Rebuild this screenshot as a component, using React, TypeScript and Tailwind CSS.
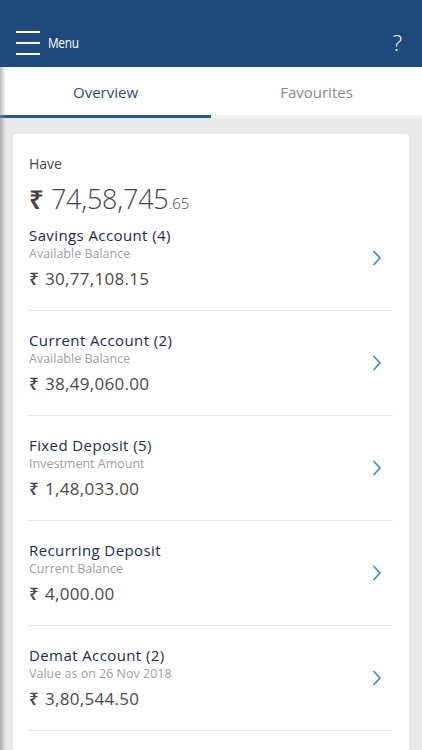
import React from "react";

const rows = [
  { title: "Savings Account (4)", sub: "Available Balance", amt: "30,77,108.15" },
  { title: "Current Account (2)", sub: "Available Balance", amt: "38,49,060.00" },
  { title: "Fixed Deposit (5)", sub: "Investment Amount", amt: "1,48,033.00" },
  { title: "Recurring Deposit", sub: "Current Balance", amt: "4,000.00" },
  { title: "Demat Account (2)", sub: "Value as on 26 Nov 2018", amt: "3,80,544.50" },
];

function Chevron() {
  return (
    <svg width="12" height="18" viewBox="0 0 12 18" fill="none">
      <path d="M3 2.5 L9 9 L3 15.5" stroke="#4a86d8" strokeWidth="1.8" strokeLinecap="round" strokeLinejoin="round" />
    </svg>
  );
}

export default function App() {
  return (
    <div className="relative w-[422px] h-[750px] overflow-hidden bg-[#e9e9e9]" style={{ fontFamily: '"Open Sans", "Noto Sans", sans-serif' }}>
      <header className="h-[67px] bg-[#1f4a7c] flex items-end justify-between pb-[12px] pl-[16px] pr-[20px]">
        <div className="flex items-center gap-[8px]">
          <div className="flex flex-col gap-[9px] w-[24px]">
            <div className="h-[2px] bg-white" />
            <div className="h-[2px] bg-white" />
            <div className="h-[2px] bg-white" />
          </div>
          <span className="text-white text-[14px] tracking-[-0.4px] leading-none inline-block origin-left scale-x-[0.85]">Menu</span>
        </div>
        <span className="text-white text-[22px] font-light leading-none pb-[2px]">?</span>
      </header>
      <nav className="h-[51px] bg-white flex">
        <div className="w-[211px] flex items-center justify-center text-[15px] text-[#2a4b7d] border-b-[3px] border-[#2e5a8f] pt-[2px]">Overview</div>
        <div className="flex-1 flex items-center justify-center text-[15px] text-[#8a8a8a] border-b-[3px] border-[#f2f2f2] pt-[2px]">Favourites</div>
      </nav>
      <div className="px-[13px] pt-[16px]">
        <div className="bg-white rounded-[4px] px-[16px] pt-[20px]">
          <div className="text-[14px] leading-[20px] text-[#444]">Have</div>
          <div className="mt-[6px] h-[36px] flex items-baseline text-[#444]">
            <span className="text-[26px] font-semibold mr-[7px]">₹</span>
            <span className="text-[27px] leading-[36px] font-light tracking-[-0.2px]">74,58,745</span>
            <span className="text-[15px] font-light">.65</span>
          </div>
          {rows.map((r, i) => (
            <div key={i} className={i === 0 ? "pt-[9px] pb-[19px] flex items-center border-b border-[#e6e6e6]" : "pt-[19px] pb-[19px] flex items-center border-b border-[#e6e6e6]"}>
              <div className="flex-1">
                <div className="text-[15px] leading-[20px] font-medium text-[#1b2a4e] tracking-[0.4px]">{r.title}</div>
                <div className="text-[12.5px] leading-[16px] text-[#a0a0a0] mt-[1px]">{r.sub}</div>
                <div className="mt-[5px] text-[17px] leading-[24px] text-[#4a4a4a] tracking-[0.3px]">
                  <span className="font-semibold mr-[6px]">₹</span>{r.amt}
                </div>
              </div>
              <div className="pr-[10px]"><Chevron /></div>
            </div>
          ))}
          <div className="h-[40px]" />
        </div>
      </div>
      <div className="absolute left-0 top-[67px] bottom-0 w-[6px] bg-gradient-to-r from-[#8a8a8a]/60 to-transparent" />
    </div>
  );
}
